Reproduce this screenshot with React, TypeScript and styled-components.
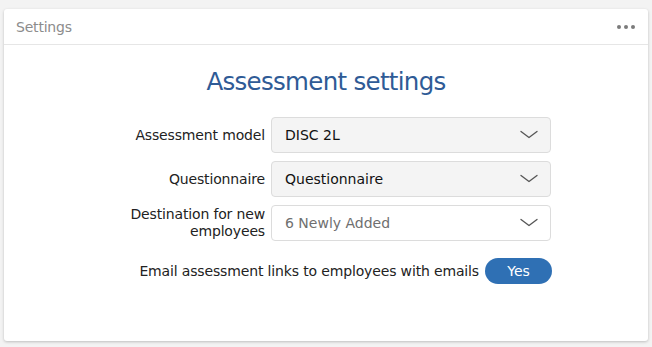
import React from "react";
import styled, { createGlobalStyle } from "styled-components";

const GlobalStyle = createGlobalStyle`
  html, body { margin: 0; padding: 0; }
  body {
    background: #f3f3f3;
    font-family: "DejaVu Sans", "Liberation Sans", sans-serif;
  }
`;

const Page = styled.div`
  padding: 9px 4px 6px 4px;
`;

const Card = styled.div`
  width: 644px;
  height: 332px;
  background: #fff;
  border-radius: 3px;
  box-shadow: 0 1px 3px rgba(0, 0, 0, 0.22);
  display: flex;
  flex-direction: column;
`;

const Header = styled.div`
  height: 35px;
  border-bottom: 1px solid #e6e6e6;
  display: flex;
  align-items: center;
  justify-content: space-between;
  padding: 0 12px 0 12px;
`;

const HeaderTitle = styled.div`
  font-size: 14px;
  color: #8c8c8c;
  font-weight: 400;
  letter-spacing: -0.2px;
`;

const Dots = styled.div`
  display: flex;
  gap: 3px;
  padding-right: 1px;
`;

const Dot = styled.span`
  width: 4px;
  height: 4px;
  border-radius: 50%;
  background: #7b7b7b;
`;

const Body = styled.div`
  display: flex;
  flex-direction: column;
`;

const Title = styled.h1`
  margin: 22px 0 0 0;
  text-align: center;
  font-size: 24.5px;
  letter-spacing: -0.7px;
  line-height: 30px;
  font-weight: 400;
  color: #2f5b96;
`;

const Form = styled.div`
  margin: 20px 0 0 116px;
  width: 432px;
  display: grid;
  grid-template-columns: 145px 280px;
  column-gap: 6px;
  row-gap: 8px;
  align-items: center;
`;

const Label = styled.div`
  text-align: right;
  font-size: 14px;
  line-height: 17px;
  color: #222;
  letter-spacing: -0.15px;
`;

const Select = styled.div<{ $muted?: boolean }>`
  height: 36px;
  box-sizing: border-box;
  border: 1px solid #dcdcdc;
  border-radius: 4px;
  background: ${(p) => (p.$muted ? "#fff" : "#f4f4f4")};
  display: flex;
  align-items: center;
  justify-content: space-between;
  padding: 0 12px 0 13px;
  font-size: 14px;
  color: ${(p) => (p.$muted ? "#6f6f6f" : "#111")};
`;

const Chevron = () => (
  <svg width="18" height="10" viewBox="0 0 18 10" fill="none">
    <path d="M1 1.5 L9 7.5 L17 1.5" stroke="#555" strokeWidth="1.3" strokeLinecap="round" strokeLinejoin="round" />
  </svg>
);

const EmailRow = styled.div`
  grid-column: 1 / span 2;
  display: flex;
  justify-content: flex-end;
  align-items: center;
  gap: 6px;
  margin-top: 9px;
`;

const EmailLabel = styled.span`
  font-size: 14px;
  color: #222;
  letter-spacing: -0.15px;
`;

const Toggle = styled.button`
  width: 67px;
  height: 26px;
  border: none;
  border-radius: 13px;
  background: #2f70b4;
  color: #fff;
  font-family: inherit;
  font-size: 14px;
  padding: 0;
  margin-right: -1px;
`;

export default function App() {
  return (
    <>
      <GlobalStyle />
      <Page>
        <Card>
          <Header>
            <HeaderTitle>Settings</HeaderTitle>
            <Dots>
              <Dot />
              <Dot />
              <Dot />
            </Dots>
          </Header>
          <Body>
            <Title>Assessment settings</Title>
            <Form>
              <Label>Assessment model</Label>
              <Select>
                <span>DISC 2L</span>
                <Chevron />
              </Select>
              <Label>Questionnaire</Label>
              <Select>
                <span>Questionnaire</span>
                <Chevron />
              </Select>
              <Label>Destination for new employees</Label>
              <Select $muted>
                <span>6 Newly Added</span>
                <Chevron />
              </Select>
              <EmailRow>
                <EmailLabel>Email assessment links to employees with emails</EmailLabel>
                <Toggle>Yes</Toggle>
              </EmailRow>
            </Form>
          </Body>
        </Card>
      </Page>
    </>
  );
}
